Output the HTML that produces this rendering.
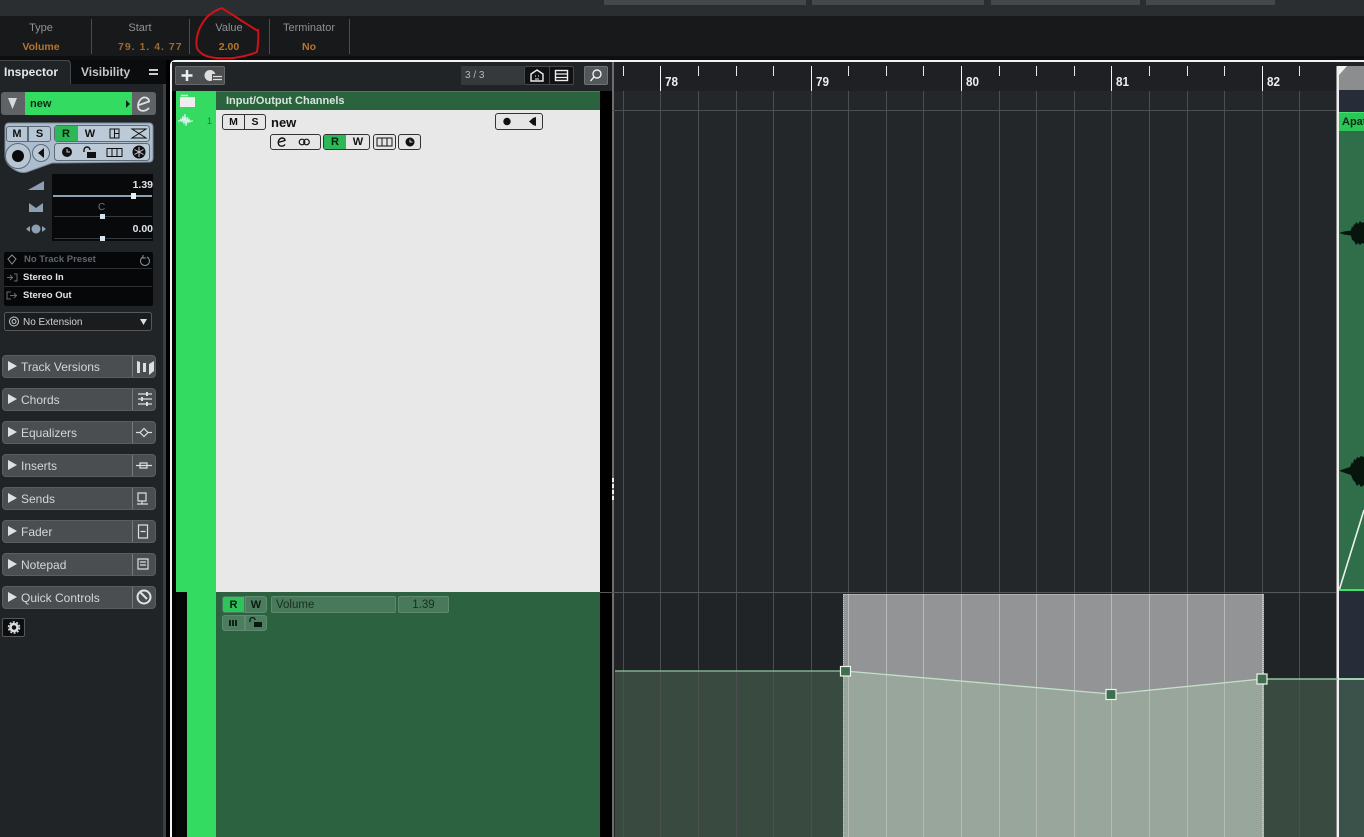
<!DOCTYPE html>
<html>
<head>
<meta charset="utf-8">
<style>
html,body{margin:0;padding:0;background:#000}
#p{position:relative;width:1364px;height:837px;overflow:hidden;background:#000;font-family:"Liberation Sans",sans-serif;color:#ddd}
#p div,#p span.a{position:absolute;box-sizing:border-box;white-space:nowrap}
svg{position:absolute;left:0;top:0}
.sec{left:2px;width:154px;height:23px;background:#4b4e51;border:1px solid #5b5e61;border-radius:4px;color:#d4d6d8;font-size:12px;line-height:23px;padding-left:18px}
.sec:before{content:"";position:absolute;left:5px;top:5px;border-left:9px solid #dfe0e1;border-top:5px solid transparent;border-bottom:5px solid transparent}
.sec:after{content:"";position:absolute;left:129px;top:0;width:1px;height:21px;background:#777a7d}
.h{font-size:11px;color:#8e9194;text-align:center;line-height:12px}
.v{font-size:10.500px;font-weight:bold;color:#b8752c;text-align:center;line-height:12px}
.sp{width:1px;top:19px;height:35px;background:#4a4d50}
.rn{font-size:13px;font-weight:bold;color:#eee;top:75px;line-height:14px;transform:scaleX(.9);transform-origin:left}
.bt{background:#e6e6e6;border:1px solid #333;border-radius:3px;color:#111;font-weight:bold;font-size:10.500px;text-align:center;line-height:14px}
.ibt{background:#b7c6d5;border:1px solid #5c6b78;color:#111;font-weight:bold;font-size:11px;text-align:center;line-height:14px}
.in{font-size:9.500px;font-weight:bold;color:#e4e4e4;line-height:12px}
</style>
</head>
<body>
<div id="p">
<!-- top bar -->
<div style="left:0;top:0;width:1364px;height:16px;background:#2b2e31"></div>
<div style="left:604px;top:0;width:202px;height:5px;background:#45484b"></div>
<div style="left:812px;top:0;width:172px;height:5px;background:#45484b"></div>
<div style="left:991px;top:0;width:149px;height:5px;background:#45484b"></div>
<div style="left:1146px;top:0;width:129px;height:5px;background:#45484b"></div>
<div style="left:0;top:16px;width:1364px;height:41px;background:#18191b"></div>
<div style="left:0;top:56px;width:1364px;height:4px;background:#0e0f10"></div>

<div class="h" style="left:11px;top:22px;width:60px">Type</div>
<div class="v" style="left:11px;top:41px;width:60px">Volume</div>
<div class="sp" style="left:91px"></div>
<div class="h" style="left:110px;top:22px;width:60px">Start</div>
<div class="v" style="left:118px;top:41px;width:85px;text-align:left;color:#9a6a30;letter-spacing:1px">79. 1. 4. 77</div>
<div class="sp" style="left:189px"></div>
<div class="h" style="left:199px;top:22px;width:60px">Value</div>
<div class="v" style="left:199px;top:41px;width:60px">2.00</div>
<div class="sp" style="left:269px"></div>
<div class="h" style="left:279px;top:22px;width:60px">Terminator</div>
<div class="v" style="left:279px;top:41px;width:60px">No</div>
<div class="sp" style="left:349px"></div>

<!-- Inspector -->
<div style="left:0;top:60px;width:163px;height:777px;background:#212427"></div>
<div style="left:163px;top:84px;width:3px;height:753px;background:#3c3f42"></div>
<div style="left:70px;top:60px;width:96px;height:24px;background:#0b0c0d"></div>
<div style="left:0;top:60px;width:71px;height:24px;background:#212427;border-top:1px solid #44474a;border-right:1px solid #44474a;border-top-right-radius:4px"></div>
<div style="left:4px;top:65px;font-size:12px;font-weight:bold;color:#e6e8ea;line-height:14px">Inspector</div>
<div style="left:81px;top:65px;font-size:12px;font-weight:bold;color:#c4c6c8;line-height:14px">Visibility</div>
<div style="left:149px;top:69px;width:9px;height:2px;background:#ccc"></div>
<div style="left:149px;top:73px;width:9px;height:2px;background:#ccc"></div>

<div style="left:1px;top:92px;width:155px;height:23px;background:#606366;border-radius:3px"></div>
<div style="left:25px;top:92px;width:107px;height:23px;background:#33dc60"></div>
<div style="left:30px;top:97px;font-size:11px;font-weight:bold;color:#0d2a16;line-height:14px">new</div>

<svg width="1364" height="837" style="z-index:1">
<polygon points="8,98 17,98 12.500,109" fill="#d8dadc"/>
<polygon points="126,100 130,104 126,108" fill="#0d2a16"/>
<path d="M139 105L149 101.500C149 97.500 144 96 141 99C137 103 137 109 141 110.500C144 111.500 147 110 149 108" fill="none" stroke="#e0e0e0" stroke-width="1.800"/>
<!-- Inspector control plate -->
<path d="M9 123H149Q153 123 153 127V158Q153 162 149 162L52 163L27 172Q20 174 12 168Q5 163 5 155V127Q5 123 9 123Z" fill="#aebdcd" stroke="#7d8c9b"/>
<circle cx="18" cy="156" r="12.500" fill="#b9c7d5" stroke="#5c6b78"/>
<circle cx="18" cy="156" r="6" fill="#0b0b0b"/>
<circle cx="41" cy="153" r="8.500" fill="#b9c7d5" stroke="#5c6b78"/>
<polygon points="38,153 44,148 44,158" fill="#111"/>
<rect x="54.500" y="125.500" width="95" height="16" rx="3" fill="#bccad8" stroke="#5c6b78"/>
<rect x="54.500" y="143.500" width="95" height="17" rx="3" fill="#bccad8" stroke="#5c6b78"/>
<rect x="55" y="126" width="23" height="15" fill="#2db858"/>
<rect x="110" y="129" width="9" height="9" fill="none" stroke="#111"/><path d="M114.500 129v9M114.500 133.500h4.500" stroke="#111"/>
<path d="M132 129h14l-14 9h14zM132 129l14 9" fill="none" stroke="#111"/>
<circle cx="67" cy="152" r="5" fill="#111"/><path d="M67 149v3h3" stroke="#ccc" fill="none"/>
<rect x="87" y="152" width="9" height="6" fill="#111"/><path d="M84 152v-2a3 3 0 0 1 6 0" fill="none" stroke="#111" stroke-width="1.400"/>
<rect x="107" y="148.500" width="15" height="8" fill="none" stroke="#111"/><path d="M112 149v8M117 149v8" stroke="#111"/>
<circle cx="139" cy="152" r="6.500" fill="#111"/><path d="M139 147v10M134.500 149.500l9 5M143.500 149.500l-9 5" stroke="#ccd" stroke-width="1"/>
<!-- small inspector icons -->
<polygon points="28,190 44,181 44,190" fill="#8da0b3"/>
<polygon points="29,203 36,208 43,203 43,212 29,212" fill="#8da0b3"/>
<circle cx="36" cy="229" r="4.500" fill="#8da0b3"/><polygon points="30,226 26,229 30,232" fill="#8da0b3"/><polygon points="42,226 46,229 42,232" fill="#8da0b3"/>
<!-- faders -->
<rect x="52" y="174" width="101" height="67" fill="#08090a"/>
<rect x="53" y="195" width="99" height="2" fill="#8da0b3"/>
<rect x="54" y="216" width="98" height="1" fill="#333a40"/>
<rect x="54" y="238" width="98" height="1" fill="#333a40"/>
<rect x="131" y="193" width="5" height="6" fill="#e8eef4"/>
<rect x="100" y="214" width="5" height="5" fill="#d6e2ec"/>
<rect x="100" y="236" width="5" height="5" fill="#d6e2ec"/>
<!-- preset block -->
<rect x="4" y="252" width="149" height="54" rx="2" fill="#060708"/>
<path d="M4 268.500H152M4 286.500H152" stroke="#2e3134"/>
<path d="M12 255l4 4-4 5-4-5z" fill="none" stroke="#8a8f94"/>
<path d="M143 257a4.500 4.500 0 1 0 4 0M143 255v3h3" fill="none" stroke="#8a8f94"/>
<path d="M7 277.500h5M10 275l2.500 2.500L10 280M14 274h3v7h-3" fill="none" stroke="#686c70"/>
<path d="M11 292H7v7h4M10 295.500h6M14 293l2.500 2.500L14 298" fill="none" stroke="#686c70"/>
<rect x="4.500" y="312.500" width="147" height="18" rx="2" fill="#1a1c1e" stroke="#55585b"/>
<circle cx="14" cy="321.500" r="4.500" fill="none" stroke="#ccc"/><circle cx="14" cy="321.500" r="2" fill="none" stroke="#ccc"/>
<polygon points="140,319 147,319 143.500,325" fill="#ddd"/>
<!-- section icons -->
<g fill="#dcdee0">
<path d="M137 361l3 1v11h-3zM143 363h3v9h-3zM149 364l5-3v10l-5 4z"/>
</g>
<g stroke="#dcdee0" fill="none" stroke-width="1.200">
<path d="M138 394h14M138 399h14M138 404h14"/>
<path d="M136 432.500h4M148 432.500h4M140 432.500l4-4 4 4-4 4z"/>
<path d="M136 465.500h16M140 463h7v5h-7z"/>
<path d="M138 493h8v8h-8zM137 504h11M142 501v3"/>
<path d="M138.500 525h9v13h-9zM140.500 531.500h5"/>
<path d="M138 559h10v10h-10zM140 562h6M140 565h6"/>
</g>
<g fill="#dcdee0"><rect x="146" y="392" width="2" height="4"/><rect x="141" y="397" width="2" height="4"/><rect x="146" y="402" width="2" height="4"/></g>
<circle cx="144" cy="597" r="6.500" fill="none" stroke="#e2e2e2" stroke-width="2"/><path d="M140 592l7 7" stroke="#e2e2e2" stroke-width="2"/>
<!-- gear -->
<circle cx="14" cy="627.500" r="3.500" fill="none" stroke="#ddd" stroke-width="2.500"/>
<circle cx="14" cy="627.500" r="5.500" fill="none" stroke="#ddd" stroke-width="1.500" stroke-dasharray="2 1.500"/>
</svg>
<div class="ibt" style="z-index:2;left:6px;top:126px;width:22px;height:16px;border-radius:3px 0 0 3px">M</div>
<div class="ibt" style="z-index:2;left:28px;top:126px;width:23px;height:16px;border-radius:0 3px 3px 0">S</div>
<div style="z-index:2;left:54px;top:127px;width:24px;font-size:11px;font-weight:bold;color:#06200e;text-align:center;line-height:14px">R</div>
<div style="z-index:2;left:78px;top:127px;width:24px;font-size:11px;font-weight:bold;color:#111;text-align:center;line-height:14px">W</div>
<div style="z-index:2;left:113px;top:179px;width:40px;text-align:right;font-size:10.500px;font-weight:bold;color:#dfe3e7;line-height:12px">1.39</div>
<div style="z-index:2;left:98px;top:202px;width:9px;font-size:10px;color:#6d7780;line-height:12px">C</div>
<div style="z-index:2;left:113px;top:223px;width:40px;text-align:right;font-size:10.500px;font-weight:bold;color:#dfe3e7;line-height:12px">0.00</div>
<div class="in" style="z-index:2;left:24px;top:254px;color:#5f666e">No Track Preset</div>
<div class="in" style="z-index:2;left:23px;top:272px">Stereo In</div>
<div class="in" style="z-index:2;left:23px;top:290px">Stereo Out</div>
<div style="z-index:2;left:23px;top:316px;font-size:10px;color:#d0d2d4;line-height:13px">No Extension</div>

<div class="sec" style="top:355px">Track Versions</div>
<div class="sec" style="top:388px">Chords</div>
<div class="sec" style="top:421px">Equalizers</div>
<div class="sec" style="top:454px">Inserts</div>
<div class="sec" style="top:487px">Sends</div>
<div class="sec" style="top:520px">Fader</div>
<div class="sec" style="top:553px">Notepad</div>
<div class="sec" style="top:586px">Quick Controls</div>
<div style="left:2px;top:618px;width:23px;height:19px;background:#0c0d0e;border:1px solid #55585b;border-radius:2px"></div>

<!-- Project window frame -->
<div style="left:170px;top:60px;width:1194px;height:777px;border-left:2px solid #f2f2f2;border-top:2px solid #f2f2f2;border-top-left-radius:5px;background:#000"></div>
<div style="left:172px;top:62px;width:1192px;height:29px;background:#212427"></div>
<div style="left:175px;top:66px;width:50px;height:19px;background:#4b4e51;border:1px solid #65686b;border-radius:2px"></div>
<div style="left:461px;top:66px;width:63px;height:19px;background:#36393c"></div>
<div style="left:465px;top:70px;font-size:10px;color:#b5b8bb;line-height:12px">3 / 3</div>
<div style="left:524px;top:66px;width:50px;height:19px;background:#101113;border:1px solid #45484b;border-radius:2px"></div>
<div style="left:549px;top:66px;width:1px;height:19px;background:#45484b"></div>
<div style="left:584px;top:66px;width:24px;height:19px;background:#54575a;border:1px solid #707376;border-radius:2px"></div>

<!-- Track list -->
<div style="left:176px;top:91px;width:40px;height:19px;background:#33dc60"></div>
<div style="left:216px;top:91px;width:384px;height:19px;background:#2a633e;border-top:1px solid #4b7a5c"></div>
<div style="left:226px;top:94px;font-size:11px;font-weight:bold;color:#d8e4dc;line-height:14px">Input/Output Channels</div>
<div style="left:176px;top:110px;width:40px;height:482px;background:#33dc60"></div>
<div style="left:216px;top:110px;width:384px;height:482px;background:#e8e8e8"></div>
<div style="left:207px;top:116px;font-size:9px;color:#1c7a3a;line-height:11px">1</div>

<div class="bt" style="left:222px;top:114px;width:23px;height:16px;border-radius:3px 0 0 3px">M</div>
<div class="bt" style="left:244px;top:114px;width:22px;height:16px;border-radius:0 3px 3px 0">S</div>
<div style="left:271px;top:115px;font-size:13px;font-weight:bold;color:#111;line-height:15px">new</div>
<div class="bt" style="left:270px;top:134px;width:51px;height:16px"></div>
<div class="bt" style="left:323px;top:134px;width:47px;height:16px"></div>
<div style="left:324px;top:135px;width:22px;height:14px;background:#2db858;border-radius:2px 0 0 2px;color:#06200e;font-size:11px;font-weight:bold;text-align:center;line-height:14px">R</div>
<div style="left:347px;top:135px;width:22px;height:14px;color:#111;font-size:11px;font-weight:bold;text-align:center;line-height:14px">W</div>
<div class="bt" style="left:373px;top:134px;width:23px;height:16px"></div>
<div class="bt" style="left:398px;top:134px;width:23px;height:16px"></div>
<div class="bt" style="left:495px;top:113px;width:48px;height:17px"></div>

<!-- automation track head -->
<div style="left:176px;top:592px;width:11px;height:245px;background:#060606"></div>
<div style="left:187px;top:592px;width:29px;height:245px;background:#33dc60"></div>
<div style="left:216px;top:592px;width:384px;height:245px;background:#2c623f"></div>
<div style="left:222px;top:596px;width:23px;height:17px;background:#2dc45c;border:1px solid #4a7a5c;border-radius:3px 0 0 3px;color:#06200e;font-size:11px;font-weight:bold;text-align:center;line-height:16px">R</div>
<div style="left:245px;top:596px;width:22px;height:17px;background:#4c7d5f;border:1px solid #5f8a6f;border-radius:0 3px 3px 0;color:#0b1a10;font-size:11px;font-weight:bold;text-align:center;line-height:16px">W</div>
<div style="left:222px;top:615px;width:23px;height:16px;background:#4c7d5f;border:1px solid #5f8a6f;border-radius:3px 0 0 3px"></div>
<div style="left:245px;top:615px;width:22px;height:16px;background:#4c7d5f;border:1px solid #5f8a6f;border-radius:0 3px 3px 0"></div>
<div style="left:271px;top:596px;width:125px;height:17px;background:#47795a;border:1px solid #5f8a6f;border-radius:2px;color:#18301f;font-size:11.500px;padding-left:4px;line-height:17px">Volume</div>
<div style="left:398px;top:596px;width:51px;height:17px;background:#47795a;border:1px solid #5f8a6f;border-radius:2px;color:#18301f;font-size:11.500px;text-align:center;line-height:17px">1.39</div>

<!-- Arrange -->
<div style="left:612px;top:60px;width:752px;height:2px;background:#f2f2f2"></div>
<svg width="1364" height="837" style="z-index:3">
<!-- toolbar icons -->
<path d="M187 70v11M181.500 75.500h11" stroke="#eee" stroke-width="2.500"/>
<circle cx="210" cy="75.500" r="5.500" fill="#ddd"/>
<rect x="212" y="74" width="10" height="8" fill="#4b4e51"/><path d="M213 76.500h9M213 79.500h9" stroke="#ddd" stroke-width="1.300"/>
<path d="M531 81v-7l6-4 6 4v7z" fill="none" stroke="#eee" stroke-width="1.400"/><path d="M535 76h1M538 76h1M535 79h4" stroke="#eee"/>
<rect x="555.500" y="70.500" width="12" height="10" fill="none" stroke="#eee" stroke-width="1.400"/><path d="M556 74h11M556 77.500h11" stroke="#eee" stroke-width="1.200"/>
<circle cx="597" cy="74" r="4" fill="none" stroke="#eee" stroke-width="1.400"/><path d="M594 77l-3.500 4" stroke="#eee" stroke-width="1.400"/>
<!-- folder -->
<path d="M180 97h15v10h-15z" fill="#eee"/><path d="M181 95.500h7" stroke="#eee" stroke-width="1.500"/><path d="M180 96.800h15" stroke="#33dc60" stroke-width=".6"/>
<!-- wave -->
<path d="M178 121h2l1-2 1 3 1-6 1 8 1-10 1 12 1-9 1 6 1-4 1 3 1-1 2 0" fill="none" stroke="#eef" stroke-width="1"/>
<!-- header icons -->
<path d="M278 142.500L285 140.500C285 138 282 137.500 280.500 138.500C277.500 140.500 277.500 145 280.500 146C282 146.500 284 146 285 144.500" fill="none" stroke="#111" stroke-width="1.400"/>
<circle cx="302" cy="142" r="2.800" fill="none" stroke="#111" stroke-width="1.200"/><circle cx="306.500" cy="142" r="2.800" fill="none" stroke="#111" stroke-width="1.200"/>
<rect x="377" y="138" width="15" height="8" fill="none" stroke="#111"/><path d="M382 138v8M387 138v8" stroke="#111"/>
<circle cx="410" cy="142" r="4.500" fill="#111"/><path d="M410 139.500v2.500h2.500" stroke="#ddd" fill="none"/>
<circle cx="507" cy="121.500" r="3.700" fill="#111"/>
<polygon points="529,121.500 533,118 536,117 536,126 533,125" fill="#111"/>
<!-- auto small -->
<path d="M230 620v6M233 620v6M236 620v6" stroke="#0b1a10" stroke-width="1.800"/>
<rect x="254" y="622" width="8" height="5" fill="#0b1a10"/><path d="M250 622v-2a2.500 2.500 0 0 1 5 0" fill="none" stroke="#0b1a10" stroke-width="1.300"/>
</svg>

<!-- arrange background -->
<div style="left:612px;top:62px;width:725px;height:775px;background:#24272a"></div>
<div style="left:612px;top:62px;width:725px;height:29px;background:#1f2023"></div>
<svg width="1364" height="837" style="z-index:4">
<rect x="612" y="62" width="2" height="775" fill="#6b6d6f"/>
<!-- automation fill -->
<polygon points="615,671 843,671 843,837 615,837" fill="#394b40"/>
<polygon points="1264,679 1338,679 1338,837 1264,837" fill="#394b40"/>
<rect x="615" y="594" width="228" height="77" fill="#212427"/>
<rect x="1264" y="594" width="74" height="85" fill="#212427"/>
<!-- selection -->
<rect x="843" y="594" width="421" height="243" fill="#929496"/>
<polygon points="843,671 845,671 1111,694 1262,679 1264,679 1264,837 843,837" fill="#99a69b"/>
<rect x="843" y="594" width="421" height="1" fill="#c4c4c4" opacity=".6"/>
<path d="M843.500 594V837M1263.500 594V837" stroke="#cfcfcf" stroke-dasharray="1 1" opacity=".8"/>
<!-- grid -->
<g stroke="#4c4f52" stroke-width="1">
<path d="M623.500 91V837M660.500 91V837M698.500 91V837M736.500 91V837M773.500 91V837M811.500 91V837"/>
<path d="M1299.500 91V837"/>
<path d="M848.500 91V594M886.500 91V594M923.500 91V594M961.500 91V594M999.500 91V594M1036.500 91V594M1074.500 91V594M1111.500 91V594M1149.500 91V594M1187.500 91V594M1224.500 91V594M1262.500 91V594"/>
</g>
<g stroke="#b6bab8" stroke-width="1">
<path d="M848.500 594V837M886.500 594V837M923.500 594V837M961.500 594V837M999.500 594V837M1036.500 594V837M1074.500 594V837M1111.500 594V837M1149.500 594V837M1187.500 594V837M1224.500 594V837M1262.500 594V837"/>
</g>
<rect x="612" y="110" width="725" height="1" fill="#4d5053"/>
<rect x="600" y="592" width="737" height="1" fill="#55585b"/>
<!-- ruler ticks -->
<g stroke="#e6e6e6" stroke-width="1">
<path d="M623.500 66V76M698.500 66V76M736.500 66V76M773.500 66V76M848.500 66V76M886.500 66V76M923.500 66V76M999.500 66V76M1036.500 66V76M1074.500 66V76M1149.500 66V76M1187.500 66V76M1224.500 66V76M1299.500 66V76"/>
<path d="M660.500 66V91M811.500 66V91M961.500 66V91M1111.500 66V91M1262.500 66V91" stroke="#f4f4f4"/>
</g>
<!-- splitter dots -->
<path d="M612 478h2v4h-2zM612 484h2v4h-2zM612 490h2v4h-2zM612 496h2v4h-2z" fill="#eee"/>
<!-- right event -->
<rect x="1336" y="66" width="1" height="771" fill="#8a8c8e"/>
<rect x="1337" y="66" width="2" height="771" fill="#efefef"/>
<rect x="1339" y="66" width="25" height="24" fill="#8b8d8f"/>
<polygon points="1339,66 1347,66 1339,75" fill="#f2f2f2"/>
<rect x="1339" y="90" width="25" height="22" fill="#262d38"/>
<rect x="1339" y="112" width="25" height="478" fill="#2f6e48"/>
<rect x="1339" y="112" width="25" height="19" fill="#2cc557"/>
<rect x="1339" y="112" width="25" height="1" fill="#46e070"/>
<rect x="1339" y="589" width="25" height="2" fill="#3fe06c"/>
<rect x="1339" y="591" width="25" height="88" fill="#262d38"/>
<rect x="1339" y="679" width="25" height="158" fill="#3a524a"/>
<path d="M1339.500 589L1364 510" stroke="#e8f2ea" stroke-width="1.600" fill="none"/>
<polygon points="1339,233 1344,231.500 1351,230.500 1352,226 1353,228 1354,224 1355,225 1356,222 1358,224 1360,221 1362,223 1364,222 1364,244 1362,243 1360,245 1358,243 1356,245 1354,241 1352,240 1351,235.500 1344,234.500" fill="#07150c"/>
<polygon points="1339,470.700 1344,469 1350,467 1352,462 1353,464 1354,459 1356,460 1357,457 1359,458 1361,456 1364,457 1364,485 1361,487 1359,484 1357,486 1355,482 1353,480 1351,475 1345,473" fill="#07150c"/>
<!-- automation line -->
<polyline points="615,671 845,671" fill="none" stroke="#8fc7a0" stroke-width="1.300"/>
<polyline points="1262,679 1338,679" fill="none" stroke="#8fc7a0" stroke-width="1.500"/>
<polyline points="845,671 1111,694 1262,679" fill="none" stroke="#c3e0ca" stroke-width="1.300"/>
<rect x="1339" y="678" width="25" height="2" fill="#9fd1ae"/>
<g fill="#3e6e4e" stroke="#eef4ef" stroke-width="1.200">
<rect x="840.500" y="666.500" width="10" height="9.500"/>
<rect x="1106" y="689.500" width="10" height="10"/>
<rect x="1257" y="674" width="10" height="10"/>
</g>
<!-- red circle -->
<path d="M222 8C216 10 210 14 207 17C202 23 198 30 197 37C196 43 196 47 198 50C201 54 205 56 210 57C218 59 226 58 233 58C241 57 250 55 257 52C258 45 259 37 258 30C256 31 255 29 253 28C247 24 240 20 233 15C229 13 225 10 222 8" fill="none" stroke="#cf1219" stroke-width="2"/>
</svg>
<div class="rn" style="z-index:5;left:665px">78</div>
<div class="rn" style="z-index:5;left:816px">79</div>
<div class="rn" style="z-index:5;left:966px">80</div>
<div class="rn" style="z-index:5;left:1116px">81</div>
<div class="rn" style="z-index:5;left:1267px">82</div>
<div style="z-index:5;left:1342px;top:116px;font-size:11px;font-weight:bold;color:#0c2a16;line-height:13px">Apat</div>
</div>
</body>
</html>
